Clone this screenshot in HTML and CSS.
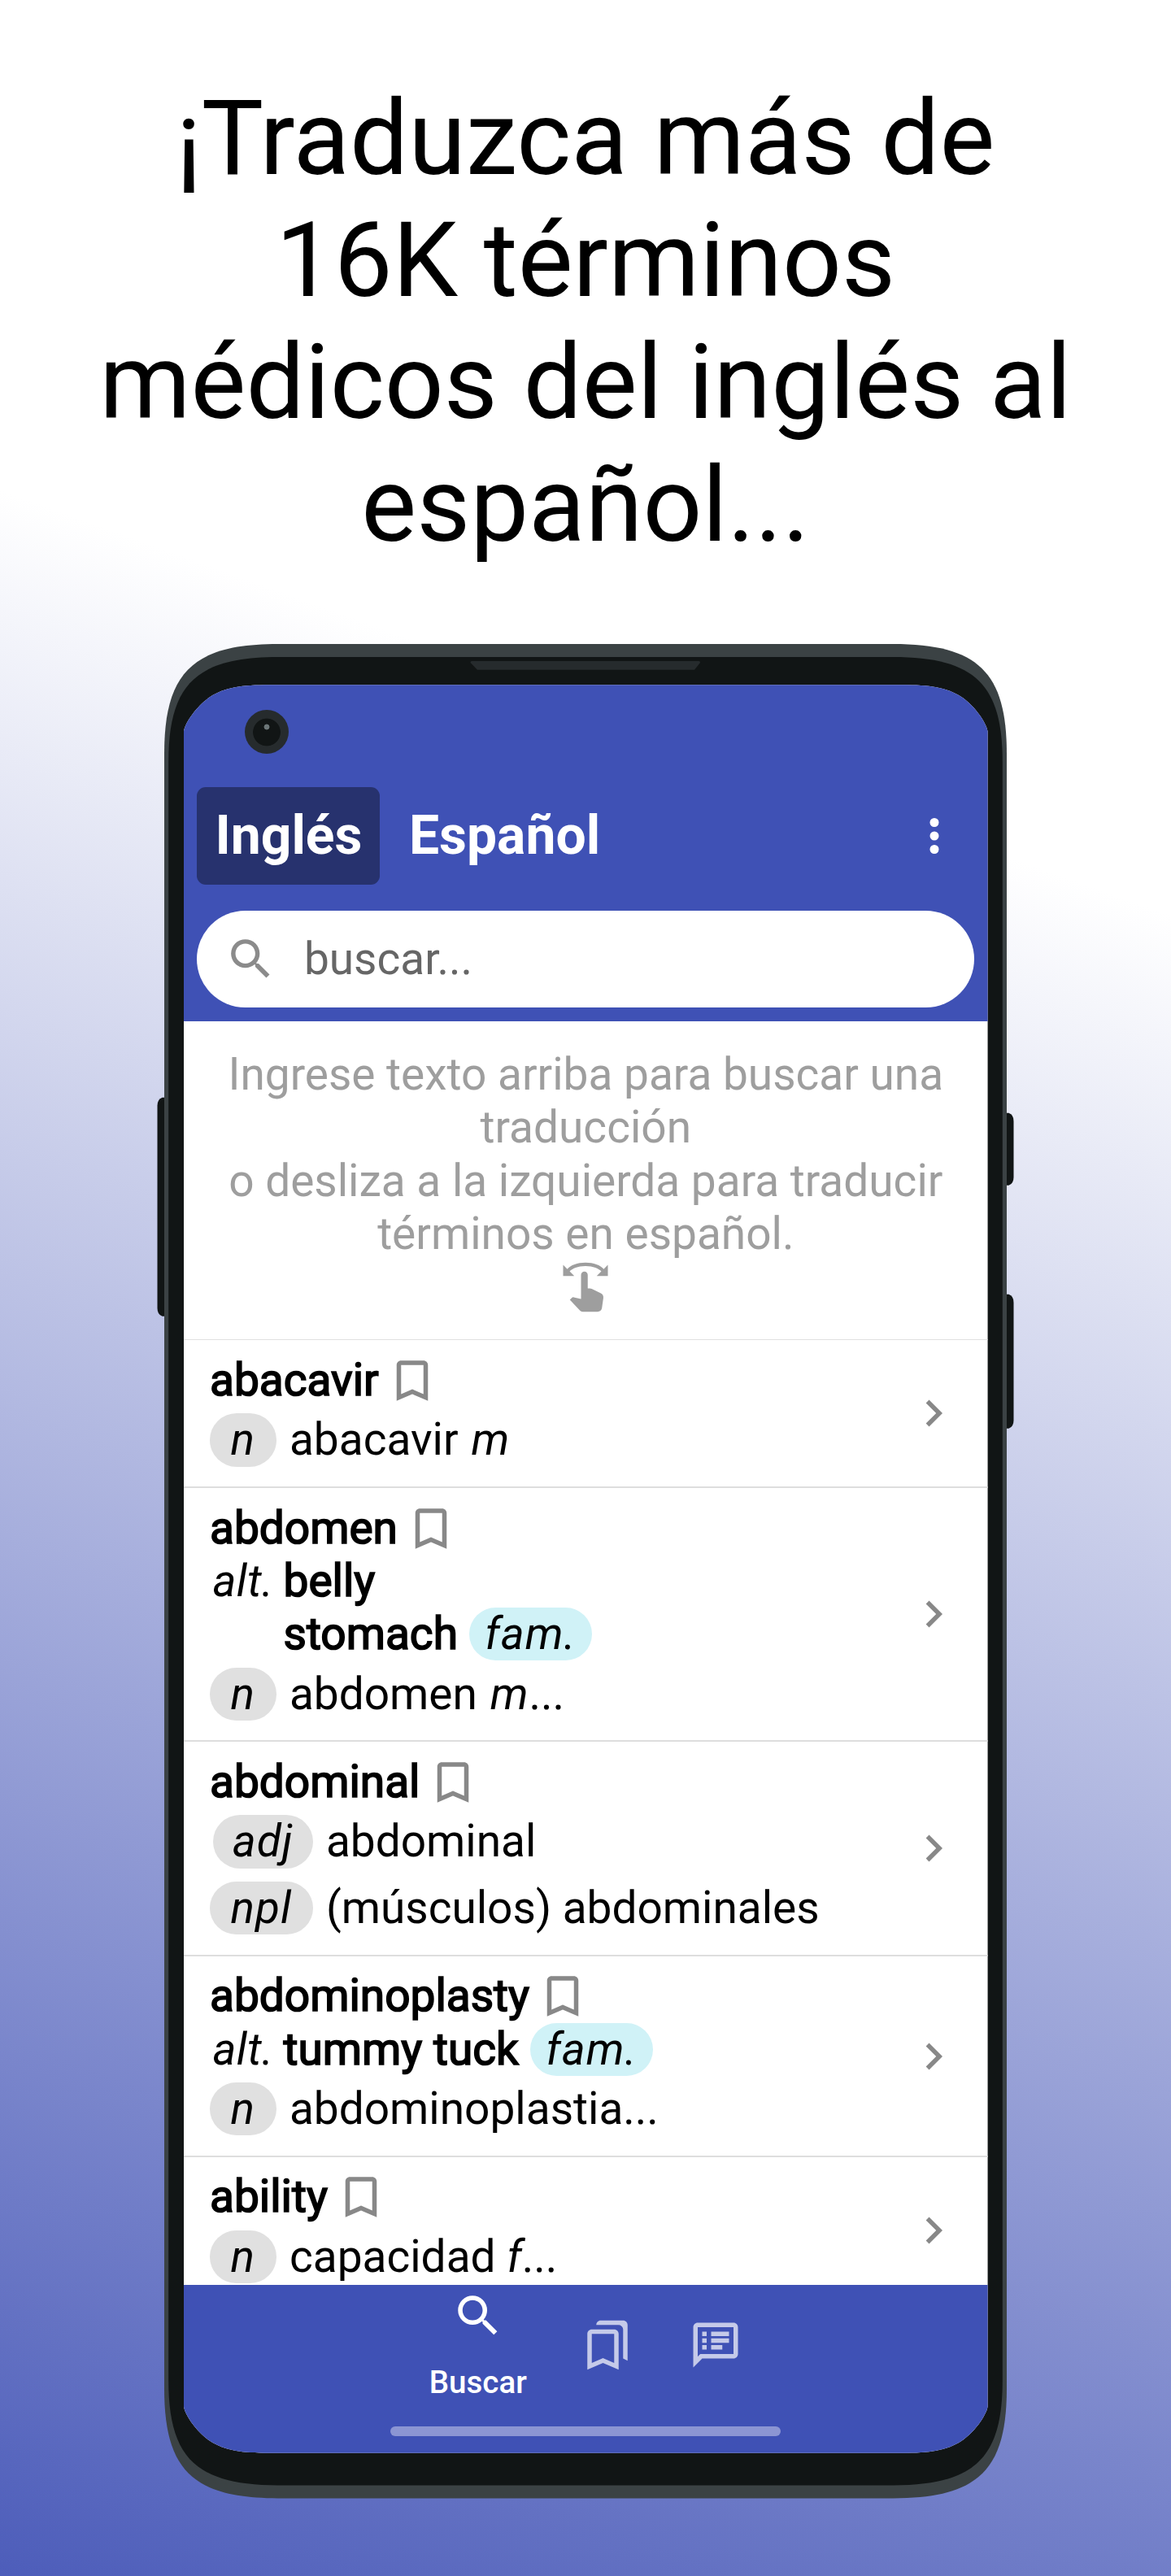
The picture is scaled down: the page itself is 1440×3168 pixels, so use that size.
FILE: index.html
```html
<!DOCTYPE html>
<html lang="es">
<head>
<meta charset="utf-8">
<title>Diccionario médico</title>
<link rel="stylesheet" href="styles.css">
</head>
<body>
<svg class="defs" aria-hidden="true">
  <symbol id="i-search" viewBox="0 0 24 24"><path d="M15.5 14h-.79l-.28-.27A6.471 6.471 0 0 0 16 9.5 6.5 6.5 0 1 0 9.5 16c1.61 0 3.09-.59 4.23-1.57l.27.28v.79l5 4.99L20.49 19l-4.99-5zm-6 0C7.01 14 5 11.99 5 9.5S7.01 5 9.5 5 14 7.01 14 9.5 11.99 14 9.5 14z"/></symbol>
  <symbol id="i-more" viewBox="0 0 24 24"><circle cx="12" cy="6" r="2"/><circle cx="12" cy="12" r="2"/><circle cx="12" cy="18" r="2"/></symbol>
  <symbol id="i-bookmark" viewBox="0 0 24 24"><path d="M17 3H7c-1.1 0-2 .9-2 2v16l7-3 7 3V5c0-1.1-.9-2-2-2zm0 15l-5-2.18L7 18V5h10v13z"/></symbol>
  <symbol id="i-chevron" viewBox="0 0 24 24"><path d="M10 6L8.59 7.41 13.17 12l-4.58 4.59L10 18l6-6z"/></symbol>
  <symbol id="i-swipe" viewBox="0 0 24 24"><path d="M18.89 14.75l-4.09-2.04c-.28-.14-.58-.21-.89-.21H13v-6C13 5.67 12.33 5 11.5 5S10 5.67 10 6.5v10.74l-3.25-.74c-.33-.07-.68.03-.92.28L5 17.62l4.54 4.79c.38.38 1.14.59 1.67.59h6.16c1 0 1.84-.73 1.98-1.72l.63-4.46c.12-.85-.32-1.68-1.09-2.07zM20.13 3.87C18.69 2.17 15.6 1 12 1S5.31 2.17 3.87 3.87L2 2v5h5L4.93 4.93c1-1.29 3.7-2.43 7.07-2.43s6.07 1.14 7.07 2.43L17 7h5V2l-1.87 1.87z"/></symbol>
  <symbol id="i-bookmarks" viewBox="0 0 24 24"><path d="M19 1H8.99C7.89 1 7 1.9 7 3h10c1.1 0 2 .9 2 2v13l2 1V3c0-1.1-.9-2-2-2z"/><path d="M15 7v12.97l-4.21-1.81-.79-.34-.79.34L5 19.97V7h10m0-2H5c-1.1 0-2 .9-2 2v16l7-3 7 3V7c0-1.1-.9-2-2-2z"/></symbol>
  <symbol id="i-notes" viewBox="0 0 24 24"><path d="M20 2H4c-1.1 0-1.99.9-1.99 2L2 22l4-4h14c1.1 0 2-.9 2-2V4c0-1.1-.9-2-2-2zm0 14H5.17l-.59.59-.58.58V4h16v12zM6 12h2v2H6zm0-3h2v2H6zm0-3h2v2H6zm4 6h5v2h-5zm0-3h8v2h-8zm0-3h8v2h-8z"/></symbol>
</svg>

<h1 class="headline">¡Traduzca más de<br>16K términos<br>médicos del inglés al<br>español...</h1>

<div class="phone">
  <svg class="phone-frame" viewBox="0 0 1036 2280.4" aria-hidden="true">
    <g class="bezel">
      <path d="M0 557.7h-2.5q-6 2-6 10v249q0 8 6 10H0z"/>
      <path d="M1036 576.7h2.5q6 2 6 10v69q0 8-6 10H1036z"/>
      <path d="M1036 799.7h2.5q6 2 6 10v145q0 8-6 10H1036z"/>
    </g>
    <path class="rim" d="M0 135C0 35 35 0 140 0H896C1001 0 1036 35 1036 135V2145.4C1036 2245.4 1001 2280.4 896 2280.4H140C35 2280.4 0 2245.4 0 2145.4Z"/>
    <path class="bezel" d="M5.2 145C5.2 51 38 16 140 16H896C998 16 1030.8 51 1030.8 145V2135.4C1030.8 2229.4 998 2264.4 896 2264.4H140C38 2264.4 5.2 2229.4 5.2 2135.4Z"/>
    <path class="speaker" d="M378 21H657.500q1.500 0 1.500 2L652 31.800H385L376.500 23q0-2 1.500-2z"/>
  </svg>

  <div class="screen">
    <div class="camera"></div>
    <header class="header">
      <div class="tabs">
        <span class="tab tab-active">Inglés</span>
        <span class="tab">Español</span>
        <svg class="icon more"><use href="#i-more"/></svg>
      </div>
      <div class="search">
        <svg class="search-icon"><use href="#i-search"/></svg>
        <span>buscar...</span>
      </div>
    </header>

    <main class="content">
      <div class="hint">
        <p>Ingrese texto arriba para buscar una<br>traducción<br>o desliza a la izquierda para traducir<br>términos en español.</p>
        <svg class="icon"><use href="#i-swipe"/></svg>
      </div>

      <article class="entry">
        <div class="entry-body">
          <h2 class="term">abacavir<svg class="icon"><use href="#i-bookmark"/></svg></h2>
          <div class="senses">
            <div class="pos"><i class="pill">n</i></div><div>abacavir <i class="gender">m</i></div>
          </div>
        </div>
        <svg class="icon"><use href="#i-chevron"/></svg>
      </article>

      <article class="entry">
        <div class="entry-body">
          <h2 class="term">abdomen<svg class="icon"><use href="#i-bookmark"/></svg></h2>
          <div class="alts">
            <i class="alt-label">alt.</i>
            <div>
              <div class="alt"><b>belly</b></div>
              <div class="alt"><b>stomach</b><i class="pill pill-fam">fam.</i></div>
            </div>
          </div>
          <div class="senses">
            <div class="pos"><i class="pill">n</i></div><div>abdomen <i class="gender">m</i>...</div>
          </div>
        </div>
        <svg class="icon"><use href="#i-chevron"/></svg>
      </article>

      <article class="entry">
        <div class="entry-body">
          <h2 class="term">abdominal<svg class="icon"><use href="#i-bookmark"/></svg></h2>
          <div class="senses">
            <div class="pos"><i class="pill pill-adj">adj</i></div><div>abdominal</div>
            <div class="pos"><i class="pill">npl</i></div><div>(músculos) abdominales</div>
          </div>
        </div>
        <svg class="icon"><use href="#i-chevron"/></svg>
      </article>

      <article class="entry">
        <div class="entry-body">
          <h2 class="term">abdominoplasty<svg class="icon"><use href="#i-bookmark"/></svg></h2>
          <div class="alts">
            <i class="alt-label">alt.</i>
            <div class="alt"><b>tummy tuck</b><i class="pill pill-fam">fam.</i></div>
          </div>
          <div class="senses">
            <div class="pos"><i class="pill">n</i></div><div>abdominoplastia...</div>
          </div>
        </div>
        <svg class="icon"><use href="#i-chevron"/></svg>
      </article>

      <article class="entry">
        <div class="entry-body">
          <h2 class="term">ability<svg class="icon"><use href="#i-bookmark"/></svg></h2>
          <div class="senses">
            <div class="pos"><i class="pill">n</i></div><div>capacidad <i>f</i>...</div>
          </div>
        </div>
        <svg class="icon"><use href="#i-chevron"/></svg>
      </article>
    </main>

    <nav class="bottom-nav">
      <div class="nav-items">
        <div class="nav-item nav-active"><svg class="icon"><use href="#i-search"/></svg><span>Buscar</span></div>
        <div class="nav-item"><svg class="icon"><use href="#i-bookmarks"/></svg></div>
        <div class="nav-item"><svg class="icon"><use href="#i-notes"/></svg></div>
      </div>
      <div class="home-bar"></div>
    </nav>
  </div>
</div>
</body>
</html>
```
FILE: styles.css
```css
* { box-sizing: border-box; }

body {
  margin: 0;
  width: 1440px;
  height: 3168px;
  overflow: hidden;
  background: linear-gradient(20deg, #4d5dba 0%, #fff 69.5%);
  font: 400 55px/65.3px Roboto, sans-serif;
  color: #000;
}

.defs { display: none; }

.headline {
  margin: 0;
  padding-top: 94.6px;
  font-size: 128px;
  font-weight: 400;
  line-height: 150.4px;
  text-align: center;
}

.icon {
  flex: none;
  display: block;
  width: 66px;
  height: 66px;
  fill: currentColor;
}

/* Device */
.phone {
  position: relative;
  width: 1036px;
  height: 2280.4px;
  margin: 96.1px 0 0 202.3px;
  padding: 50px 23.7px 56px;
}

.phone-frame {
  position: absolute;
  inset: 0;
  width: 1036px;
  height: 2280.4px;
  overflow: visible;
}

.rim { fill: #3b4244; }
.bezel { fill: #111515; }
.speaker { fill: #262b2d; }

.screen {
  position: relative;
  display: flex;
  flex-direction: column;
  height: 2174.4px;
  background: #fff;
  clip-path: path("M0 57C2 45 18 24 32 15C50 3 72 0 105 0H883.6C916.6 0 938.600 3 956.600 15C970.600 24 986.600 45 988.600 57V2117.400C986.600 2129.400 970.600 2150.400 956.600 2159.400C938.600 2171.400 916.600 2174.400 883.600 2174.400H105C72 2174.400 50 2171.400 32 2159.400C18 2150.400 2 2129.400 0 2117.400Z");
}

.camera {
  position: absolute;
  left: 75px;
  top: 31px;
  width: 54px;
  height: 54px;
  border-radius: 50%;
  background: radial-gradient(circle at 27px 21px, #6b7577 3px, transparent 3.8px),
              radial-gradient(circle at 27px 27.500px, #111515 16.500px, #262b2d 17.300px);
}

/* App bar */
.header {
  flex: none;
  height: 413.7px;
  padding: 125.7px 16.4px 0;
  background: #3f51b5;
  color: #fff;
}

.tabs {
  display: flex;
  align-items: center;
  gap: 13.5px;
  height: 119.6px;
  margin-bottom: 32px;
  font-size: 66px;
  font-weight: 700;
}

.tab {
  display: flex;
  align-items: center;
  height: 100%;
  padding: 0 22px;
  border-radius: 11px;
  line-height: 77.4px;
}

.tab-active { background: #27326e; }

.more { margin: 0 16.5px 0 auto; }

.search {
  display: flex;
  align-items: center;
  gap: 33px;
  height: 119.6px;
  padding-left: 33.5px;
  border-radius: 60px;
  background: #fff;
  color: #666;
}

.search-icon {
  width: 65px;
  height: 65px;
  fill: #8b8b8b;
}

/* Dictionary list */
.content {
  flex: 1;
  min-height: 0;
  overflow: hidden;
}

.hint {
  display: flex;
  flex-direction: column;
  align-items: center;
  height: 392px;
  padding-top: 33.1px;
  border-bottom: 1px solid #e0e0e0;
  color: #9e9e9e;
  text-align: center;
}

.hint p { margin: 0; }

.entry {
  display: flex;
  align-items: center;
  justify-content: space-between;
  padding: 16.8px 34px 16px 32px;
  border-bottom: 2px solid #dedede;
}

.entry > .icon { color: #888; }

.term {
  display: flex;
  gap: 8px;
  height: 65.3px;
  margin: 0;
  font-size: inherit;
}

.term .icon { color: #888; }

/* Headwords use the regular cut thickened by a stroke */
.term,
.alt b {
  font-weight: 400;
  -webkit-text-stroke: 1.7px currentColor;
}

.term .icon { stroke: none; }

.alts {
  display: flex;
  gap: 12px;
  padding-left: 3.4px;
}

.alt {
  display: flex;
  gap: 14px;
}

.alt-label { letter-spacing: 0.4px; }

.gender {
  margin-left: 2.2px;
  letter-spacing: 1px;
}

.senses {
  display: grid;
  grid-template-columns: max-content max-content;
  column-gap: 16.3px;
  row-gap: 16.4px;
  padding: 8.2px 0;
}

.pos { text-align: right; }

.pill {
  display: inline-block;
  height: 65.3px;
  padding: 0 25.6px;
  border-radius: 33px;
  background: #e0e0e0;
  letter-spacing: 1px;
  vertical-align: top;
}

.pill-adj { padding: 0 24px; }

.pill-fam {
  padding: 0 19.2px;
  background: #d0f2f7;
}

/* Bottom navigation */
.bottom-nav {
  flex: none;
  height: 206.4px;
  background: #3f51b5;
}

.nav-items {
  display: flex;
  align-items: center;
  justify-content: center;
  gap: 66.5px;
  height: 146.4px;
}

.nav-item { color: #c5cae9; }

.nav-active {
  display: flex;
  flex-direction: column;
  align-items: center;
  gap: 25.5px;
  color: #fff;
  font-size: 38.5px;
  font-weight: 500;
  line-height: 45px;
}

.home-bar {
  width: 480.4px;
  height: 11.6px;
  margin: 27.5px auto 0;
  border-radius: 6px;
  background: #8b95d3;
}
```
